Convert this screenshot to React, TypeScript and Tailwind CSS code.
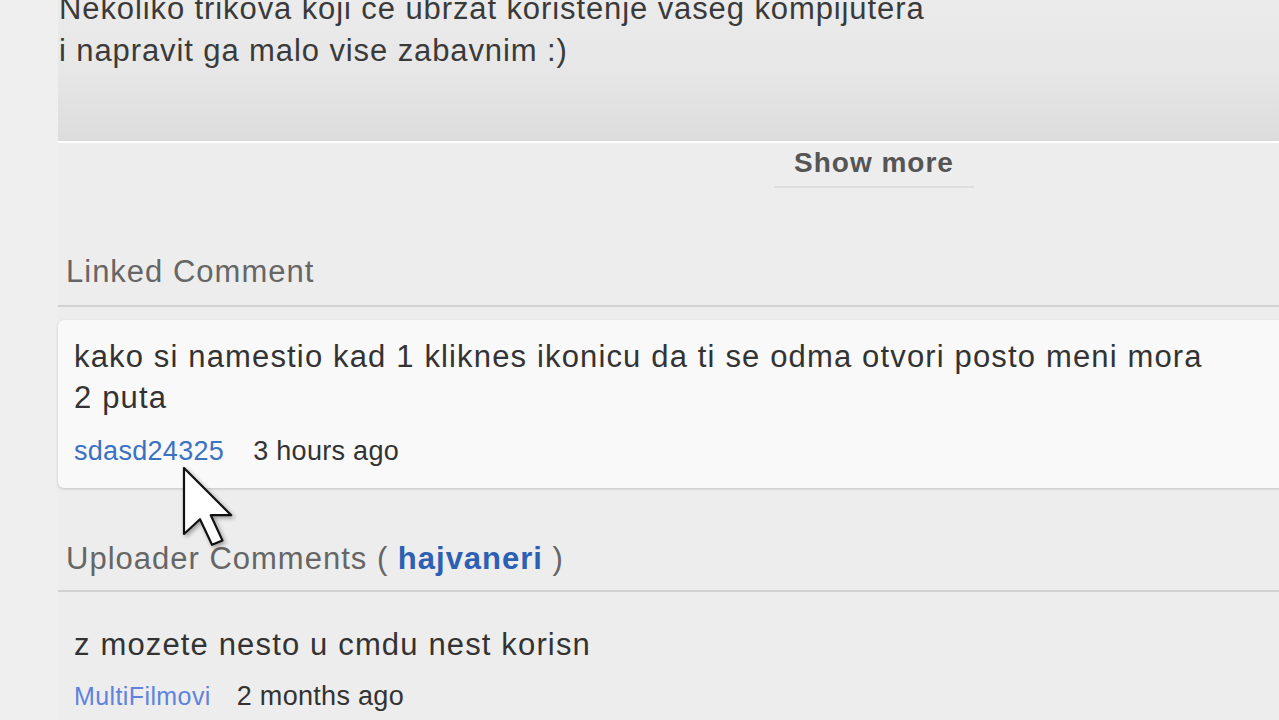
import React from "react";

export default function App() {
  return (
    <div
      className="relative w-[1279px] h-[720px] overflow-hidden bg-[#ededed] flex"
      style={{ fontFamily: '"Liberation Sans", Arial, sans-serif' }}
    >
      <div className="w-[58px] shrink-0 bg-[#efefef]" />
      <div className="w-[1632px] shrink-0 flex flex-col">
        {/* description */}
        <div className="h-[141px] overflow-hidden bg-gradient-to-b from-[#ebebeb] via-[#e7e7e7] to-[#dcdcdc]">
          <div className="mt-[-12px] pl-[1px] text-[31px] tracking-[0.9px] leading-[42px] text-[#3a3a3a]">
            <div>Nekoliko trikova koji ce ubrzat koristenje vaseg kompijutera</div>
            <div>i napravit ga malo vise zabavnim :)</div>
          </div>
        </div>
        <div className="h-[2px] bg-white" />

        {/* show more */}
        <div className="flex justify-center">
          <span className="px-[20px] pb-[3px] border-b-2 border-[#dedede] text-[28px] tracking-[1px] leading-[40px] font-bold text-[#555555]">
            Show more
          </span>
        </div>

        {/* linked comment */}
        <div className="mt-[64px] pl-2 text-[31px] tracking-[1px] leading-[40px] text-[#666666]">
          Linked Comment
        </div>
        <div className="mt-[13px] h-[2px] bg-[#d2d2d2]" />
        <div className="mt-[13px] h-[168px] rounded-[6px] bg-[#f9f9f9] shadow-[0_1px_3px_rgba(0,0,0,0.18)] px-4 pt-4">
          <div className="w-[1140px] text-[31px] tracking-[1.15px] leading-[41px] text-[#333333]">
            kako si namestio kad 1 kliknes ikonicu da ti se odma otvori posto meni mora 2 puta
          </div>
          <div className="mt-[15px] flex gap-[29px] text-[27px] tracking-[0.3px] leading-[36px]">
            <span className="text-[#3b72c4]">sdasd24325</span>
            <span className="text-[#333333]">3 hours ago</span>
          </div>
        </div>

        {/* uploader comments */}
        <div className="mt-[51px] pl-2 text-[31px] tracking-[1px] leading-[40px] text-[#666666]">
          Uploader Comments ({" "}
          <span className="font-bold text-[#2d5fb2]">hajvaneri</span> )
        </div>
        <div className="mt-[11px] h-[2px] bg-[#d2d2d2]" />
        <div className="px-4">
          <div className="mt-[32px] text-[31px] tracking-[1.15px] leading-[41px] text-[#333333]">
            z mozete nesto u cmdu nest korisn
          </div>
          <div className="mt-[13px] flex gap-[26px] text-[27px] tracking-[0.3px] leading-[36px]">
            <span className="text-[25px] tracking-[0.4px] text-[#5f83dd]">MultiFilmovi</span>
            <span className="text-[#333333]">2 months ago</span>
          </div>
        </div>
      </div>

      {/* mouse cursor */}
      <svg
        className="absolute left-[182px] top-[466px]"
        width="56"
        height="84"
        viewBox="-0.5 -0.5 14 21"
        style={{ filter: "drop-shadow(2px 2px 2px rgba(0,0,0,0.35))" }}
      >
        <path
          d="M0 0 L0 16.5 L4 12.8 L7 19.2 L9.6 18.1 L6.7 11.8 L11.8 11.8 Z"
          fill="#ffffff"
          stroke="#111111"
          strokeWidth="0.55"
          strokeLinejoin="round"
        />
      </svg>
    </div>
  );
}
